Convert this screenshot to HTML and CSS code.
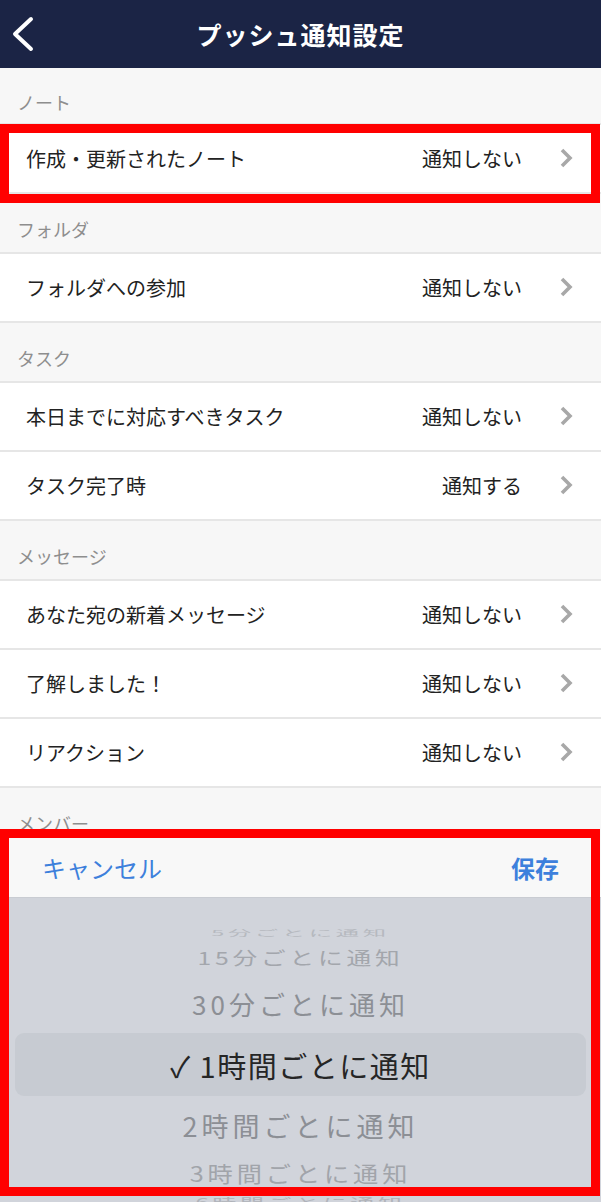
FILE: index.html
```html
<!DOCTYPE html>
<html>
    <head>
        <meta charset="utf-8">
        <title>プッシュ通知設定</title>
        <link rel="stylesheet" href="styles.css">
    </head>
    <body>
        <header class="topbar">
            <a class="back" href="#">
                <svg width="24" height="36" viewBox="0 0 24 36"><polyline points="20,3 4,18 20,33" fill="none" stroke="#fff" stroke-width="4" stroke-linecap="round" stroke-linejoin="round"/></svg>
            </a>
            <h1>プッシュ通知設定</h1>
            <span></span>
        </header>

        <div class="section first">ノート</div>
        <div class="row marked">
            <span class="label">作成・更新されたノート</span>
            <span class="value">通知しない</span>
            <svg class="chev" width="14" height="22" viewBox="0 0 14 22"><polyline points="3,3 11,11 3,19" fill="none" stroke="#a8a8a8" stroke-width="3.6"/></svg>
        </div>

        <div class="section">フォルダ</div>
        <div class="row">
            <span class="label">フォルダへの参加</span>
            <span class="value">通知しない</span>
            <svg class="chev" width="14" height="22" viewBox="0 0 14 22"><polyline points="3,3 11,11 3,19" fill="none" stroke="#a8a8a8" stroke-width="3.6"/></svg>
        </div>

        <div class="section">タスク</div>
        <div class="row">
            <span class="label">本日までに対応すべきタスク</span>
            <span class="value">通知しない</span>
            <svg class="chev" width="14" height="22" viewBox="0 0 14 22"><polyline points="3,3 11,11 3,19" fill="none" stroke="#a8a8a8" stroke-width="3.6"/></svg>
        </div>
        <div class="row">
            <span class="label">タスク完了時</span>
            <span class="value">通知する</span>
            <svg class="chev" width="14" height="22" viewBox="0 0 14 22"><polyline points="3,3 11,11 3,19" fill="none" stroke="#a8a8a8" stroke-width="3.6"/></svg>
        </div>

        <div class="section">メッセージ</div>
        <div class="row">
            <span class="label">あなた宛の新着メッセージ</span>
            <span class="value">通知しない</span>
            <svg class="chev" width="14" height="22" viewBox="0 0 14 22"><polyline points="3,3 11,11 3,19" fill="none" stroke="#a8a8a8" stroke-width="3.6"/></svg>
        </div>
        <div class="row">
            <span class="label">了解しました！</span>
            <span class="value">通知しない</span>
            <svg class="chev" width="14" height="22" viewBox="0 0 14 22"><polyline points="3,3 11,11 3,19" fill="none" stroke="#a8a8a8" stroke-width="3.6"/></svg>
        </div>
        <div class="row">
            <span class="label">リアクション</span>
            <span class="value">通知しない</span>
            <svg class="chev" width="14" height="22" viewBox="0 0 14 22"><polyline points="3,3 11,11 3,19" fill="none" stroke="#a8a8a8" stroke-width="3.6"/></svg>
        </div>

        <div class="section">メンバー</div>

        <div class="sheet marked">
            <div class="toolbar">
                <a href="#" class="cancel">キャンセル</a>
                <a href="#" class="save">保存</a>
            </div>
            <div class="picker">
                <div class="item far">5分ごとに通知</div>
                <div class="item near-top">15分ごとに通知</div>
                <div class="item side">30分ごとに通知</div>
                <div class="item selected">✓ 1時間ごとに通知</div>
                <div class="item side below">2時間ごとに通知</div>
                <div class="item near-bottom">3時間ごとに通知</div>
                <div class="item far-bottom">6時間ごとに通知</div>
            </div>
        </div>
    </body>
</html>
```

FILE: styles.css
```css
html, body {
    margin: 0;
    padding: 0;
    background: #f7f7f7;
    font-family: "Noto Sans CJK JP", "Noto Sans", sans-serif;
    color: #222;
}

a {
    text-decoration: none;
}

.topbar {
    display: grid;
    grid-template-columns: 60px 1fr 60px;
    align-items: center;
    height: 68px;
    background: #1b2445;
}

.back {
    display: flex;
    padding: 0 0 0 11px;
}

.topbar h1 {
    margin: 0;
    text-align: center;
    color: #fff;
    font-size: 25px;
    font-weight: bold;
    letter-spacing: 1px;
}

.section {
    box-sizing: border-box;
    height: 60px;
    padding: 24px 0 0 17px;
    font-size: 18px;
    line-height: 22px;
    color: #8e8e8e;
    border-bottom: 2px solid #e6e6e6;
}

.section.first {
    height: 57px;
    padding-top: 23px;
}

.row {
    box-sizing: border-box;
    display: flex;
    align-items: center;
    height: 69px;
    padding: 0 28px 0 26px;
    background: #fff;
    border-bottom: 2px solid #e6e6e6;
    font-size: 20px;
}

.label {
    flex: 1;
}

.value {
    margin-right: 37px;
}

.chev {
    display: block;
    margin-top: -2px;
}

/* red annotation frames */
.marked {
    position: relative;
}

.marked:after {
    content: "";
    position: absolute;
    left: 0;
    width: 582px;
    border: 9px solid #ff0000;
    pointer-events: none;
}

.row.marked:after {
    top: -1px;
    height: 61px;
}

.sheet {
    position: fixed;
    left: 0;
    right: 0;
    bottom: 0;
    height: 373px;
    background: #d1d4db;
}

.sheet.marked:after {
    top: 0;
    height: 349px;
}

.toolbar {
    box-sizing: border-box;
    display: flex;
    justify-content: space-between;
    align-items: center;
    height: 69px;
    padding: 9px 42px 0 42px;
    background: #f8f8f8;
    border-bottom: 1px solid #c9ccd2;
    font-size: 24px;
}

.cancel {
    color: #3d80dc;
}

.save {
    color: #3d80dc;
    font-weight: 600;
}

.picker {
    height: 304px;
    overflow: hidden;
    padding-top: 22px;
    box-sizing: border-box;
}

.item {
    display: flex;
    justify-content: center;
    align-items: center;
    font-size: 26px;
    letter-spacing: 4px;
    color: #8c8f95;
    white-space: nowrap;
}

.far {
    height: 24px;
    color: #b6b9bf;
    transform: scale(0.9, 0.3);
}

.near-top {
    height: 26px;
    color: #a3a6ac;
    transform: scale(0.95, 0.68);
}

.side {
    height: 63px;
    padding-top: 4px;
    box-sizing: border-box;
}

.side.below {
    height: 58px;
    padding-top: 0;
    font-size: 27px;
}

.selected {
    height: 63px;
    margin: 0 15px;
    border-radius: 9px;
    background: #c7cbd2;
    font-size: 29px;
    letter-spacing: 1.5px;
    color: #262626;
}

.near-bottom {
    height: 36px;
    color: #a1a4aa;
    transform: scale(0.97, 0.82);
}

.far-bottom {
    height: 24px;
    color: #b0b3b9;
    transform: scale(0.92, 0.45);
}
```
